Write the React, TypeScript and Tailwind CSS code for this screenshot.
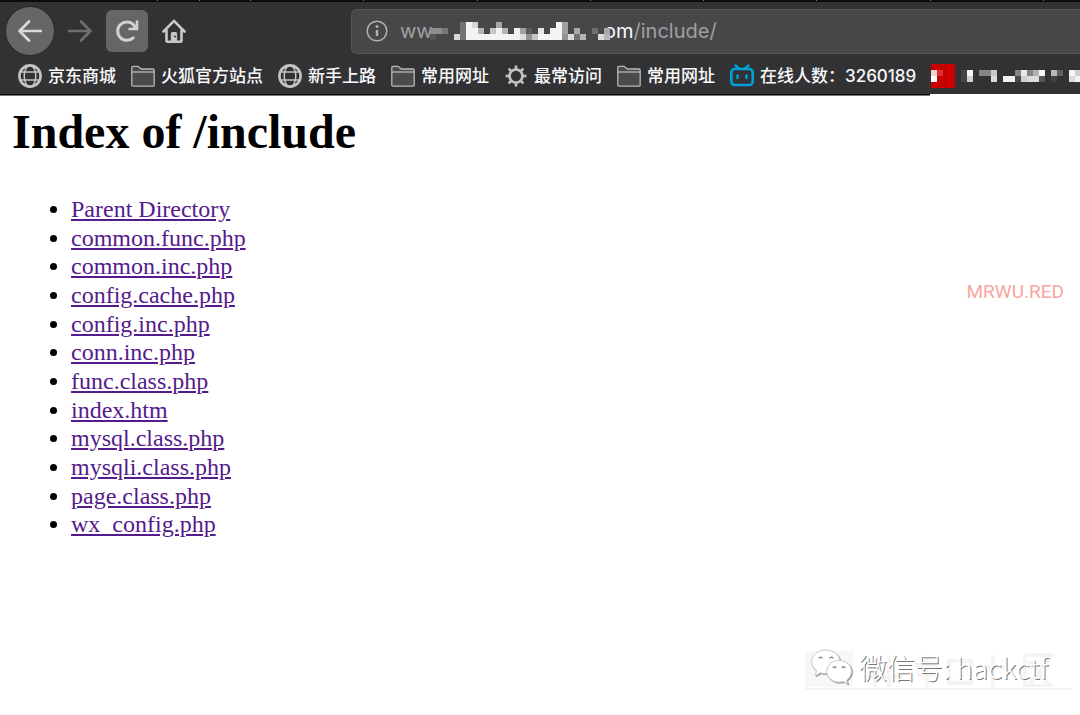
import React from "react";

const files = [
  "Parent Directory",
  "common.func.php",
  "common.inc.php",
  "config.cache.php",
  "config.inc.php",
  "conn.inc.php",
  "func.class.php",
  "index.htm",
  "mysql.class.php",
  "mysqli.class.php",
  "page.class.php",
  "wx_config.php",
];

type Cell = [x: number, y: number, w: number, color: string];

const hostCells: Cell[] = [
  [0, 6, 12, "#8d8d8e"], [12, 6, 6, "#77777a"], [0, 12, 6, "#555557"],
  [30, 0, 6, "#737375"], [36, 0, 6, "#f4f4f4"], [42, 0, 6, "#d5d5d5"], [66, 0, 6, "#a8a8a9"],
  [126, 0, 6, "#f4f4f4"], [132, 0, 6, "#a0a0a1"],
  [30, 6, 6, "#737375"], [36, 6, 12, "#f4f4f4"], [48, 6, 6, "#b5b5b6"], [60, 6, 6, "#c5c5c6"],
  [66, 6, 6, "#f4f4f4"], [72, 6, 6, "#b5b5b6"], [84, 6, 6, "#f0f0f0"], [90, 6, 6, "#a0a0a1"],
  [96, 6, 6, "#5c5c5e"], [108, 6, 6, "#e6e6e6"], [120, 6, 12, "#f4f4f4"], [132, 6, 6, "#a0a0a1"],
  [144, 6, 6, "#a8a8a9"], [162, 6, 6, "#6e6e70"], [174, 6, 6, "#a8a8a9"],
  [24, 12, 6, "#d8d8d8"], [30, 12, 6, "#737375"], [36, 12, 54, "#f4f4f4"], [90, 12, 6, "#dcdcdc"],
  [96, 12, 6, "#909091"], [102, 12, 6, "#c5c5c6"], [108, 12, 24, "#f4f4f4"], [132, 12, 6, "#909091"],
  [138, 12, 6, "#dcdcdc"], [144, 12, 6, "#737375"], [150, 12, 6, "#b5b5b6"],
  [168, 12, 6, "#dcdcdc"], [174, 12, 6, "#b5b5b6"],
];

const titleCells: Cell[] = [
  [0, 6, 6, "#f8d0d0"], [6, 6, 6, "#d83030"], [0, 12, 6, "#ffffff"],
  [30, 6, 6, "#454547"], [36, 6, 6, "#f4f4f4"], [30, 12, 6, "#454547"], [36, 12, 6, "#d0d0d0"],
  [48, 6, 12, "#858586"], [60, 6, 6, "#c8c8c8"], [60, 12, 6, "#dcdcdc"],
  [72, 12, 12, "#f0f0f0"], [84, 6, 6, "#858586"], [84, 12, 6, "#484849"],
  [90, 6, 6, "#e8e8e8"], [90, 12, 6, "#d0d0d0"], [96, 6, 6, "#858586"], [96, 12, 12, "#dcdcdc"],
  [102, 6, 6, "#b0b0b0"], [108, 6, 6, "#f4f4f4"], [108, 12, 6, "#555555"],
  [120, 6, 6, "#b8b8b8"], [126, 6, 6, "#606062"], [120, 12, 6, "#404042"],
  [138, 6, 6, "#f4f4f4"], [144, 6, 6, "#d0d0d0"], [138, 12, 6, "#dcdcdc"], [144, 12, 6, "#f4f4f4"],
];

function Cells({ cells }: { cells: Cell[] }) {
  return (
    <>
      {cells.map(([x, y, w, color]) => (
        <rect key={`${x}-${y}`} x={x} y={y} width={w} height="6" fill={color} />
      ))}
    </>
  );
}

function Globe() {
  return (
    <svg viewBox="0 0 24 24" className="size-6" fill="none" stroke="#c4c4c5" strokeWidth="1.5">
      <circle cx="12" cy="12" r="10.6" strokeWidth="2.6" />
      <ellipse cx="12" cy="12" rx="5.8" ry="10.6" />
      <path d="M2.500 8h19M2.500 16h19" />
    </svg>
  );
}

function Folder() {
  return (
    <svg viewBox="0 0 24 24" className="size-6" fill="#4b4b4d" stroke="#b8b8b9" strokeWidth="1.3" strokeLinejoin="round">
      <path d="M.8 21V3.600q0-1.200 1.200-1.200h5.200l3 2.600H22q1.200 0 1.200 1.200V21q0 1.200-1.200 1.200H2Q.8 22.200.8 21z" />
      <path d="M.8 8h22.400" />
    </svg>
  );
}

function Gear() {
  return (
    <svg viewBox="0 0 24 24" className="size-6" fill="none" stroke="#c4c4c5">
      <circle cx="12" cy="12" r="6.500" strokeWidth="2.700" />
      <path
        d="M12 1.600v4M12 18.400v4M1.600 12h4M18.400 12h4M4.650 4.650l2.800 2.800M16.550 16.550l2.800 2.800M4.650 19.350l2.800-2.800M16.550 7.450l2.800-2.800"
        strokeWidth="2.600"
      />
    </svg>
  );
}

function Bili() {
  return (
    <svg viewBox="0 0 24 24" className="size-6" fill="none" stroke="#00a1d6" strokeLinecap="round">
      <rect x="1.300" y="5" width="21.400" height="16" rx="3.500" strokeWidth="2.600" />
      <path d="M5.500 1.500l3.500 3M18.500 1.500l-3.500 3" strokeWidth="2.400" />
      <path d="M7.500 11.500v2.500M16.500 11.500v2.500" strokeWidth="2.400" />
    </svg>
  );
}

const bookmarks = [
  { icon: Globe, label: "京东商城" },
  { icon: Folder, label: "火狐官方站点" },
  { icon: Globe, label: "新手上路" },
  { icon: Folder, label: "常用网址" },
  { icon: Gear, label: "最常访问" },
  { icon: Folder, label: "常用网址" },
  { icon: Bili, label: "在线人数：3260189" },
];

const tabEdges = [157, 199, 250, 363, 477, 590, 703, 816, 930, 1043];

export default function App() {
  return (
    <div className="relative min-h-screen overflow-hidden bg-white">
      <header className="overflow-hidden bg-[#323234] font-['Inter','Noto_Sans_CJK_SC',sans-serif]">
        <svg className="block h-[2px] w-full bg-[#0c0c0d]" aria-hidden="true">
          {tabEdges.map((x) => (
            <rect key={x} x={x} y="0" width="1" height="1" fill="#77777a" />
          ))}
        </svg>
        <div className="flex h-[58px] items-center pl-1.5">
          <button aria-label="Back" className="flex size-12 items-center justify-center rounded-full bg-[#666667] ring-1 ring-[#29292a]">
            <svg viewBox="0 0 24 24" className="size-6" fill="none" stroke="#dadadb" strokeWidth="2.600" strokeLinecap="round" strokeLinejoin="round">
              <path d="M23 12H1.500M11 2.500L1.500 12l9.500 9.500" />
            </svg>
          </button>
          <button aria-label="Forward" disabled className="ml-3 flex size-7 items-center justify-center">
            <svg viewBox="0 0 24 24" className="size-6" fill="none" stroke="#6f6f71" strokeWidth="2.600" strokeLinecap="round" strokeLinejoin="round">
              <path d="M1 12h21.500M13 2.500l9.500 9.500-9.500 9.500" />
            </svg>
          </button>
          <button aria-label="Reload" className="ml-3 flex size-[42px] items-center justify-center rounded-md bg-[#666667]">
            <svg viewBox="0 0 24 24" className="size-6" fill="none" stroke="#d2d2d3" strokeWidth="3" strokeLinecap="round" strokeLinejoin="round">
              <path d="M18.200 18.800A9.200 9.200 0 1 1 18.500 5.700L21 8.500" />
              <path d="M22 2.500v7.500h-7.500" strokeWidth="2.600" />
              <path d="M22 4.500v5.500h-5.500z" fill="#d2d2d3" stroke="none" />
            </svg>
          </button>
          <button aria-label="Home" className="ml-3 flex size-7 items-center justify-center">
            <svg viewBox="0 0 24 24" className="size-6" fill="none" stroke="#c8c8c9" strokeWidth="2.600" strokeLinecap="round" strokeLinejoin="round">
              <path d="M1.500 12.500L12 1.800l10.500 10.700M4.500 11v10.500q0 1.200 1.200 1.200h12.600q1.200 0 1.200-1.200V11" />
              <path d="M9.300 22v-7.500q0-1 1-1h3.400q1 0 1 1V22z" fill="#c8c8c9" strokeWidth="1" />
              <circle cx="13" cy="17.500" r="1" fill="#323234" stroke="none" />
            </svg>
          </button>
          <div className="ml-[163px] flex h-[45px] min-w-0 flex-1 items-center rounded-l-md border border-r-0 border-[#565658] bg-[#474749] pl-3.5 text-xl leading-7 text-[#a0a0a2]">
            <svg viewBox="0 0 22 22" className="size-[22px] shrink-0" fill="none" stroke="#b1b1b3" strokeWidth="1.500">
              <circle cx="11" cy="11" r="9.800" />
              <path d="M11 10v6" strokeWidth="2.400" />
              <circle cx="11" cy="6.500" r="1.500" fill="#b1b1b3" stroke="none" />
            </svg>
            <span className="ml-3 w-[30px] shrink-0">ww</span>
            <svg viewBox="0 0 180 18" className="relative h-[18px] w-[180px] shrink-0" aria-hidden="true">
              <Cells cells={hostCells} />
            </svg>
            <span className="-ml-1.5 shrink-0 text-[#f9f9fa]">om</span>
            <input aria-label="Address" defaultValue="/include/" className="min-w-0 flex-1 bg-transparent p-0 outline-none" />
          </div>
        </div>
        <nav className="flex h-[34px] items-start gap-[15px] pt-0.5 pl-[18px] text-[17px] leading-7 font-medium whitespace-nowrap text-[#f9f9fa]">
          {bookmarks.map(({ icon: Icon, label }, i) => (
            <a key={i} href="#" className="flex shrink-0 items-center gap-1.5">
              <Icon />
              <span>{label}</span>
            </a>
          ))}
          <a href="#" aria-label="Bookmark" className="mt-0.5 shrink-0">
            <svg viewBox="0 0 150 24" className="h-6 w-[150px]">
              <rect width="24" height="24" fill="#c80000" />
              <Cells cells={titleCells} />
            </svg>
          </a>
        </nav>
        <div className="flex h-0.5 bg-white">
          <div className="w-[930px] border-b border-[#777778] bg-[#0c0c0d]" />
        </div>
      </header>

      <main className="px-3 pt-2 font-['Liberation_Serif',serif] text-black">
        <h1 className="text-[48px] leading-[56px] font-bold">Index of /include</h1>
        <ul className="mt-[35px] grid h-[344px] auto-rows-fr list-disc pl-[59px] text-2xl leading-7">
          {files.map((name) => (
            <li key={name}>
              <a href="#" className="text-[#551a8b] underline">{name}</a>
            </li>
          ))}
        </ul>
      </main>

      <div className="absolute top-[280px] right-4 font-['Roboto',sans-serif] text-[19px] leading-6 text-[#f8a5a0]">MRWU.RED</div>

      <div className="absolute right-2 bottom-[25px] flex h-[40px] w-[267px] items-center border-b-2 border-[#f3f3fa] font-['Noto_Sans_CJK_SC',sans-serif]">
        <div className="h-9 w-12 shrink-0 bg-[#f7f7f7]" />
        <svg viewBox="0 0 200 36" className="h-9 w-[200px]" fill="none" stroke="#f4f4f4" strokeWidth="4" aria-hidden="true">
          <path d="M22 8v28M36 4v32M14 26h36M62 14h24M74 4v32M64 24h20M96 10h22v22H96zM140 4v32M130 16h22M172 4h28M176 10l20 24M196 10l-20 24M172 4v31h28" />
        </svg>
      </div>
      <div className="absolute right-8 bottom-7 flex items-center gap-1.5 font-['Noto_Sans_CJK_SC',sans-serif] text-[28px] leading-10 font-light whitespace-nowrap text-white">
        <svg viewBox="0 0 44 38" className="h-9 w-[43px] drop-shadow-[1px_1px_0px_#999]" fill="#fff" stroke="#c4c4c4" strokeWidth="1">
          <path d="M16 1C7.500 1 1 6.500 1 13.500c0 4 2 7.300 5.300 9.600L5 28l5.500-2.800c1.800.5 3.500.8 5.500.8 8.300 0 15-5.500 15-12.500S24.300 1 16 1z" />
          <path d="M30 12c-7.500 0-13 5-13 11.500S22.500 35 30 35c1.500 0 3-.2 4.500-.7L39 37l-1-4.200c3-2.200 5-5.500 5-9.300C43 17 37.500 12 30 12z" />
          <path d="M8.500 10q2-3 4 0M20 10q2-3 4 0M23.500 20q2-2.500 3.500 0M33 20q2-2.500 3.500 0" fill="none" stroke="#777" strokeWidth="1.300" />
        </svg>
        <span className="[text-shadow:1px_1px_0px_#777]">微信号: hackctf</span>
      </div>
    </div>
  );
}
